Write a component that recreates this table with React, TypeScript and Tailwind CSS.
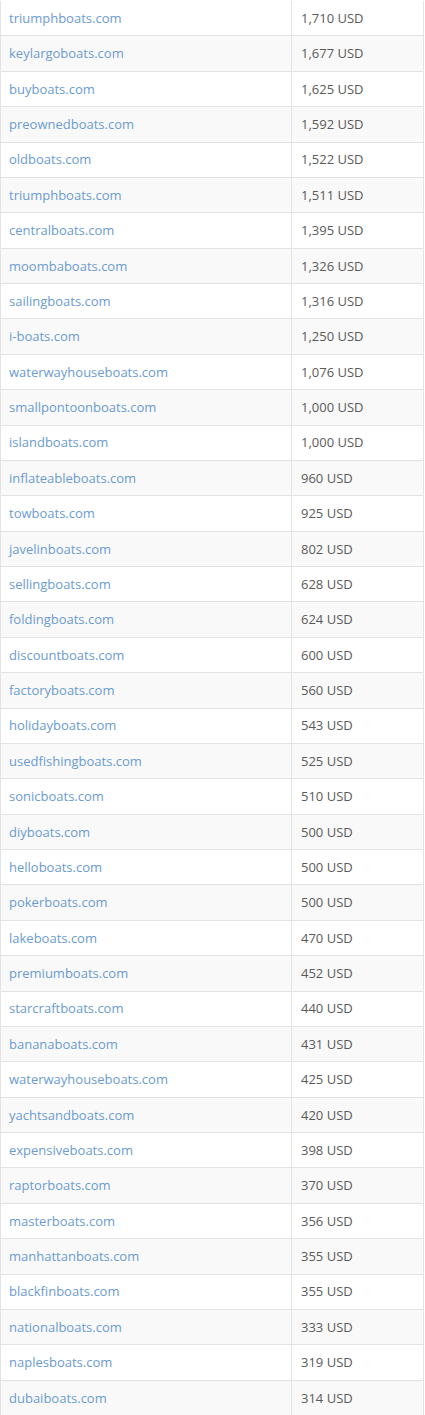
const rows: [string, string][] = [
  ["triumphboats.com", "1,710 USD"],
  ["keylargoboats.com", "1,677 USD"],
  ["buyboats.com", "1,625 USD"],
  ["preownedboats.com", "1,592 USD"],
  ["oldboats.com", "1,522 USD"],
  ["triumphboats.com", "1,511 USD"],
  ["centralboats.com", "1,395 USD"],
  ["moombaboats.com", "1,326 USD"],
  ["sailingboats.com", "1,316 USD"],
  ["i-boats.com", "1,250 USD"],
  ["waterwayhouseboats.com", "1,076 USD"],
  ["smallpontoonboats.com", "1,000 USD"],
  ["islandboats.com", "1,000 USD"],
  ["inflateableboats.com", "960 USD"],
  ["towboats.com", "925 USD"],
  ["javelinboats.com", "802 USD"],
  ["sellingboats.com", "628 USD"],
  ["foldingboats.com", "624 USD"],
  ["discountboats.com", "600 USD"],
  ["factoryboats.com", "560 USD"],
  ["holidayboats.com", "543 USD"],
  ["usedfishingboats.com", "525 USD"],
  ["sonicboats.com", "510 USD"],
  ["diyboats.com", "500 USD"],
  ["helloboats.com", "500 USD"],
  ["pokerboats.com", "500 USD"],
  ["lakeboats.com", "470 USD"],
  ["premiumboats.com", "452 USD"],
  ["starcraftboats.com", "440 USD"],
  ["bananaboats.com", "431 USD"],
  ["waterwayhouseboats.com", "425 USD"],
  ["yachtsandboats.com", "420 USD"],
  ["expensiveboats.com", "398 USD"],
  ["raptorboats.com", "370 USD"],
  ["masterboats.com", "356 USD"],
  ["manhattanboats.com", "355 USD"],
  ["blackfinboats.com", "355 USD"],
  ["nationalboats.com", "333 USD"],
  ["naplesboats.com", "319 USD"],
  ["dubaiboats.com", "314 USD"],
];

export default function App() {
  return (
    <div className="h-[1415px] w-[425px] overflow-hidden bg-white pt-px font-['Open_Sans',sans-serif] text-[13px]">
      <div className="w-[424px] border-x border-[#e3e3e3]">
        {rows.map(([domain, price], i) => (
          <div
            key={i}
            className={
              "grid h-[35.375px] grid-cols-[291px_1fr] border-b border-[#e3e3e3] " +
              (i % 2 === 1 ? "bg-[#f9f9f9]" : "bg-white")
            }
          >
            <div className="flex items-center border-r border-[#e3e3e3] pl-2 pt-px">
              <a href="#" className="text-[#6b9bd1]">
                {domain}
              </a>
            </div>
            <div className="flex items-center pl-[9px] pt-px text-[#5a5a5a]">{price}</div>
          </div>
        ))}
      </div>
    </div>
  );
}
